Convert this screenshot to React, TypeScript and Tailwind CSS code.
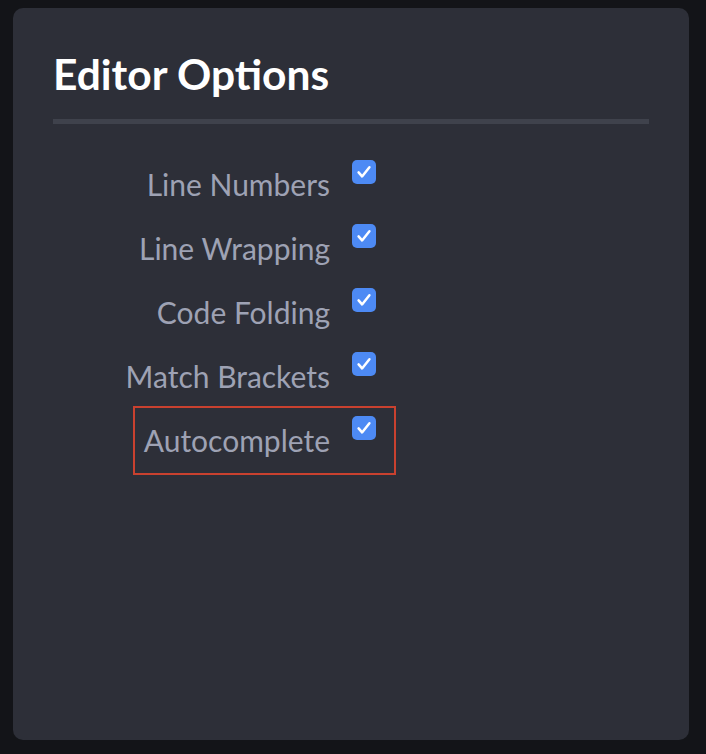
const options = [
  { label: "Line Numbers", checked: true },
  { label: "Line Wrapping", checked: true },
  { label: "Code Folding", checked: true },
  { label: "Match Brackets", checked: true },
  { label: "Autocomplete", checked: true, highlight: true },
];

function Check() {
  return (
    <span className="flex h-6 w-6 shrink-0 items-center justify-center rounded-[5px] bg-[#4d8af4]">
      <svg viewBox="0 0 24 24" className="h-5 w-5" fill="none">
        <path
          d="M5.5 12.5l4.2 4.8 8.8-11"
          stroke="#ffffff"
          strokeWidth="3"
          strokeLinecap="round"
          strokeLinejoin="round"
        />
      </svg>
    </span>
  );
}

export default function App() {
  return (
    <div className="h-[754px] w-[706px] bg-[#131418] pt-2 pl-[13px] font-['Lato',sans-serif]">
      <div className="h-[732px] w-[676px] rounded-[10px] bg-[#2d2f38] px-10 pt-10">
        {/* titre */}
        <h1 className="text-[42.5px] font-bold leading-[1.2] text-white">Editor Options</h1>
        <div className="mt-[20px] h-[5px] bg-[#3f424c]" />

        <div className="mt-[36px] flex flex-col">
          {options.map((opt) => (
            <div key={opt.label} className="relative flex h-16 items-start gap-[22px]">
              {opt.highlight && (
                <div className="absolute left-[80px] top-[-10px] h-[69px] w-[263px] border-2 border-[#c9412f]" />
              )}
              <span className="w-[277px] pt-[4px] text-right text-[30px] leading-[40px] text-[#9ea2b4]">
                {opt.label}
              </span>
              {opt.checked && <Check />}
            </div>
          ))}
        </div>
      </div>
    </div>
  );
}
